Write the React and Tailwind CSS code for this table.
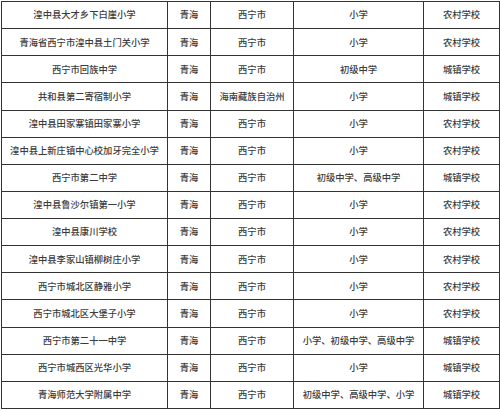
import React from "react";

const rows = [
  ["湟中县大才乡下白崖小学", "青海", "西宁市", "小学", "农村学校"],
  ["青海省西宁市湟中县土门关小学", "青海", "西宁市", "小学", "农村学校"],
  ["西宁市回族中学", "青海", "西宁市", "初级中学", "城镇学校"],
  ["共和县第二寄宿制小学", "青海", "海南藏族自治州", "小学", "城镇学校"],
  ["湟中县田家寨镇田家寨小学", "青海", "西宁市", "小学", "农村学校"],
  ["湟中县上新庄镇中心校加牙完全小学", "青海", "西宁市", "小学", "农村学校"],
  ["西宁市第二中学", "青海", "西宁市", "初级中学、高级中学", "城镇学校"],
  ["湟中县鲁沙尔镇第一小学", "青海", "西宁市", "小学", "农村学校"],
  ["湟中县康川学校", "青海", "西宁市", "小学", "农村学校"],
  ["湟中县李家山镇柳树庄小学", "青海", "西宁市", "小学", "农村学校"],
  ["西宁市城北区静雅小学", "青海", "西宁市", "小学", "农村学校"],
  ["西宁市城北区大堡子小学", "青海", "西宁市", "小学", "农村学校"],
  ["西宁市第二十一中学", "青海", "西宁市", "小学、初级中学、高级中学", "城镇学校"],
  ["西宁市城西区光华小学", "青海", "西宁市", "小学", "城镇学校"],
  ["青海师范大学附属中学", "青海", "西宁市", "初级中学、高级中学、小学", "城镇学校"],
];

export default function App() {
  return (
    <div
      className="w-[500px] h-[411px] bg-white pt-px pl-px"
      style={{ fontFamily: '"Noto Sans CJK SC", "Noto Sans", sans-serif' }}
    >
      <table className="table-fixed border-collapse w-[498px] h-[408px] text-[9.3px] font-medium text-[#3c3c3c] leading-none">
        <colgroup>
          <col className="w-[166px]" />
          <col className="w-[43px]" />
          <col className="w-[83px]" />
          <col className="w-[130px]" />
          <col className="w-[76px]" />
        </colgroup>
        <tbody>
          {rows.map((r, i) => (
            <tr key={i}>
              {r.map((c, j) => (
                <td
                  key={j}
                  className="border-[1.5px] border-[#333] text-center align-middle p-0 whitespace-nowrap"
                >
                  {c}
                </td>
              ))}
            </tr>
          ))}
        </tbody>
      </table>
    </div>
  );
}
